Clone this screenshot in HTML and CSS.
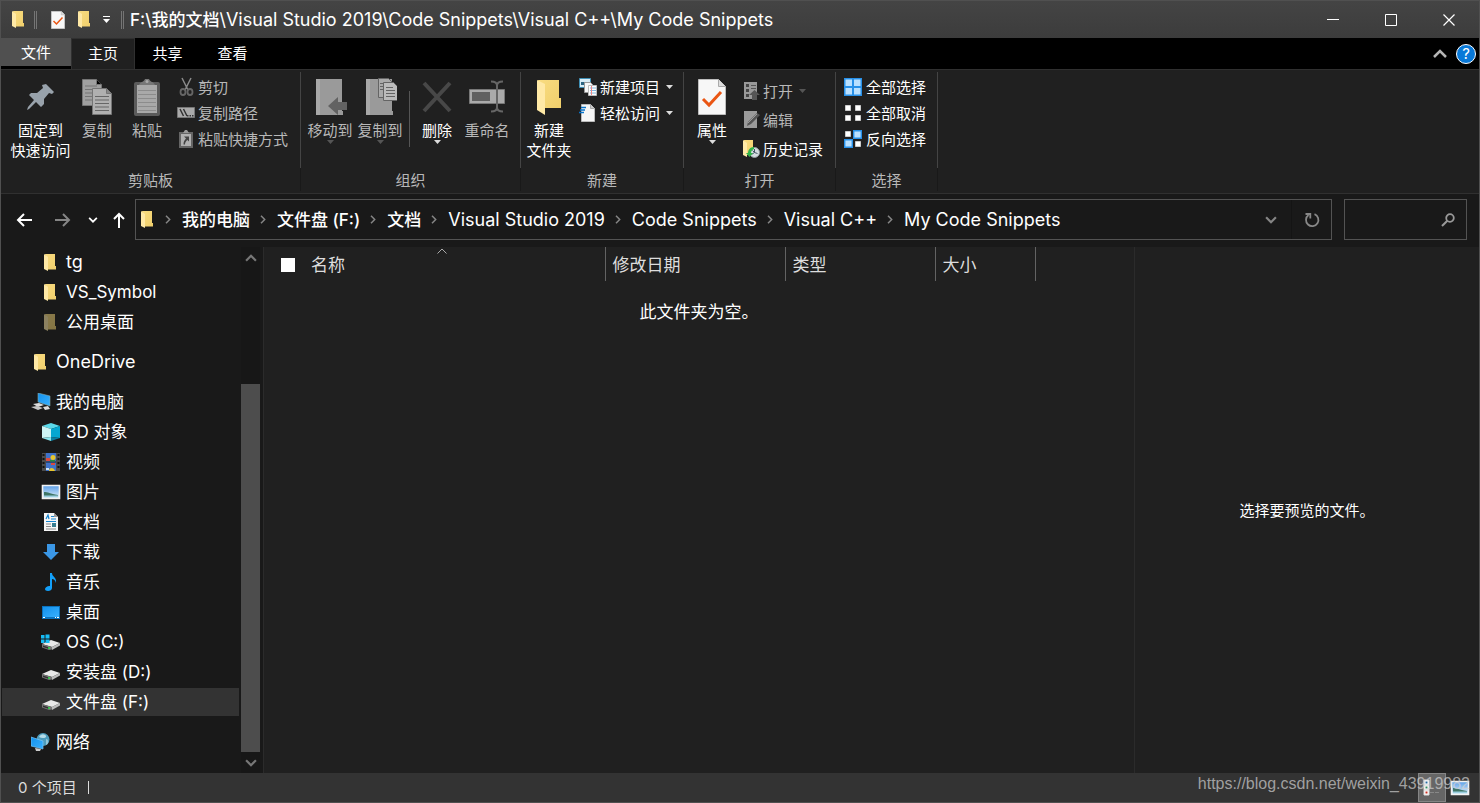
FILE: index.html
```html
<!DOCTYPE html>
<html lang="zh-CN">
<head>
<meta charset="utf-8">
<title>My Code Snippets</title>
<link rel="stylesheet" href="styles.css">
</head>
<body>
<svg class="defs" aria-hidden="true">
  <defs>
    <linearGradient id="gold" x1="0" x2="1" y1="0" y2="1"><stop offset="0" stop-color="#f9dc80"/><stop offset="1" stop-color="#f0cf6c"/></linearGradient>
    <linearGradient id="blue" x1="0" x2="1" y1="0" y2="1"><stop offset="0" stop-color="#1491ec"/><stop offset="1" stop-color="#38b0ff"/></linearGradient>
    <linearGradient id="sky" x1="0" x2="0" y1="0" y2="1"><stop offset="0" stop-color="#5b9ee8"/><stop offset="1" stop-color="#e4f2fb"/></linearGradient>
    <symbol id="folder" viewBox="0 0 12 17">
      <path d="M1 0h10v12h1v3.500H4z" fill="url(#gold)"/>
      <path d="M0 0 4 3v14L0 15z" fill="#ffe9a6"/>
    </symbol>
    <symbol id="page-check" viewBox="0 0 28 36">
      <path d="M.5.5h20l7 7v28H.5z" fill="#f7f7f7" stroke="#bdbdbd"/>
      <path d="M20.500.5v7h7" fill="#ddd" stroke="#aaa"/>
      <path d="m5 20 6 6 12-13" fill="none" stroke="#ea5614" stroke-width="3"/>
    </symbol>
    <symbol id="drop" viewBox="0 0 7 4"><path d="M0 0h7L3.500 4z" fill="currentColor"/></symbol>
    <symbol id="chev" viewBox="0 0 6 9"><path d="m1 .8 3.700 3.700L1 8.200" fill="none" stroke="currentColor" stroke-width="1.500"/></symbol>
    <symbol id="down" viewBox="0 0 11 7"><path d="m1 1 4.500 4.500L10 1" fill="none" stroke="currentColor" stroke-width="2"/></symbol>
    <symbol id="up" viewBox="0 0 11 7"><path d="m1 6 4.500-4.500L10 6" fill="none" stroke="currentColor" stroke-width="2"/></symbol>
    <symbol id="drive" viewBox="0 0 20 18">
      <path d="m1 11 9-4 9 3-8 4z" fill="#e8e8e8"/>
      <path d="m1 11 10 3v2.500L8 17l-7-2.500z" fill="#777"/>
      <path d="m11 14 8-4v2.500L11 17z" fill="#bcbcbc"/>
      <path d="m2 12.500 6 2v1.500l-6-2z" fill="#303030"/><circle cx="8" cy="15" r="1" fill="#2fe04c"/>
    </symbol>
    <symbol id="picture" viewBox="0 0 20 18">
      <path d="M1.500 2.500h17v13h-17z" fill="url(#sky)" stroke="#f2f2f2" stroke-width="1.600"/>
      <path d="M3 9c4 0 6 1.500 14 3v2H3z" fill="#3f7667"/><path d="M3 12.500h14v1.700H3z" fill="#9ccfe0"/>
    </symbol>
  </defs>
</svg>

<div class="window">
  <header class="titlebar">
    <svg class="folder-icon"><use href="#folder"/></svg>
    <span class="divider"></span>
    <button class="quick quick-check" aria-label="属性"><svg class="check-icon"><use href="#page-check"/></svg></button>
    <button class="quick" aria-label="新建文件夹"><svg class="folder-icon"><use href="#folder"/></svg></button>
    <button class="quick quick-more" aria-label="自定义"><svg width="9" height="8" viewBox="0 0 9 8"><path d="M1 0h7v1H1zM1 3h7L4.500 7z" fill="#fff"/></svg></button>
    <span class="divider"></span>
    <h1 class="title">F:\我的文档<span class="latin">\Visual Studio 2019\Code Snippets\Visual C++\My Code Snippets</span></h1>
    <div class="window-buttons">
      <button aria-label="最小化"><svg width="12" height="12"><path d="M0 5.500h12" stroke="#fff"/></svg></button>
      <button aria-label="最大化"><svg width="12" height="12"><path d="M.5.5h11v11H.5z" fill="none" stroke="#fff"/></svg></button>
      <button aria-label="关闭"><svg width="12" height="12"><path d="m.5.5 11 11m0-11-11 11" stroke="#fff" stroke-width="1.200"/></svg></button>
    </div>
  </header>

  <nav class="tabs">
    <button class="tab tab-file">文件</button>
    <button class="tab tab-active">主页</button>
    <button class="tab">共享</button>
    <button class="tab">查看</button>
    <button class="collapse" aria-label="最小化功能区"><svg width="14" height="9" viewBox="0 0 14 9"><path d="m1 8 6-6 6 6" fill="none" stroke="#b5b5b5" stroke-width="2.500"/></svg></button>
    <button class="help" aria-label="帮助">?</button>
  </nav>

  <section class="ribbon">
    <div class="group group-clip">
      <div class="tools">
        <button class="big big-wide"><svg width="28" height="40" viewBox="0 0 28 40"><path d="m19 6 8 8-2 2-3-1-5 6v5l-3 3-5-5-7 7-2 1 1-3 6-7-5-5 2-2 6 0 6-5-1-3z" fill="#98a2ab"/></svg><span>固定到<br>快速访问</span></button>
        <button class="big dim"><svg width="32" height="40" viewBox="0 0 32 40"><g stroke="#757575"><path d="M1.500 1.500h14l5 5v21h-19z" fill="#a0a0a0"/><path d="M4 8h12M4 11.500h14M4 15h8M4 18.500h8M4 22h8M15.500 1.500v5h5"/><path d="M11.500 10.500h14l5 5v21h-19z" fill="#b0b0b0"/><path d="M25.500 10.500v5h5" fill="#888"/><path d="M14 18.500h14M14 22h14M14 25.500h14M14 29h14M14 32.500h14" stroke="#666"/></g></svg><span>复制</span></button>
        <button class="big dim"><svg width="28" height="40" viewBox="0 0 28 40"><rect x="1" y="4" width="26" height="34" rx="2" fill="#5b5b5b"/><path d="M4 7h20v28H4z" fill="#a9a9a9"/><path d="M5 12.500h18M5 16.500h18M5 20.500h18M5 24.500h18M5 28.500h18M5 32.500h18" stroke="#8c8c8c"/><path d="M6 7c1-3 5-3 6-6h4c1 3 5 3 6 6z" fill="#777"/><circle cx="14" cy="3.500" r="1.500" fill="#aaa"/></svg><span>粘贴</span></button>
        <div class="small-list">
          <button class="small dim"><svg width="18" height="20" viewBox="0 0 18 20"><path d="m5 1 6 12M14 1 8 13" stroke="#8a8a8a" stroke-width="1.500"/><g fill="none" stroke="#666" stroke-width="1.800"><ellipse cx="6" cy="15" rx="2.500" ry="3"/><ellipse cx="13" cy="15" rx="2.500" ry="3"/></g></svg>剪切</button>
          <button class="small dim"><svg width="18" height="18" viewBox="0 0 18 18"><path d="M.5 3.500h17v10H.5z" fill="#aaa" stroke="#777"/><path d="m3 5 3.500 7M6.500 5l3.500 7" stroke="#333" stroke-width="1.500"/><path d="M10 11h1.500v1.500H10zM12.500 11H14v1.500h-1.500zM15 11h1.500v1.500H15z" fill="#333"/></svg>复制路径</button>
          <button class="small dim"><svg width="18" height="18" viewBox="0 0 18 18"><path d="M2 2h14v16H2z" fill="#656565"/><path d="M4 4h10v12H4z" fill="#b0b0b0"/><path d="M6 3 8 0h2l2 3z" fill="#999"/><path d="M7 6.500h5v5l-1.500-1.500C9 11 8 12.500 8 14.500H6.500c0-3 1-4.500 2.500-6z" fill="#444"/></svg>粘贴快捷方式</button>
        </div>
      </div>
      <div class="group-name">剪贴板</div>
    </div>

    <div class="group group-organize">
      <div class="tools">
        <button class="big dim"><svg width="34" height="40" viewBox="0 0 34 40"><path d="M3 1h26v32h1v4H3z" fill="#9a9a9a"/><path d="M3 1h4v36H3z" fill="#a8a8a8"/><path d="m15 28 10-9v5h10v8H25v5z" fill="#626262"/></svg><span>移动到</span><svg class="drop faded"><use href="#drop"/></svg></button>
        <button class="big dim"><svg width="34" height="40" viewBox="0 0 34 40"><path d="M3 1h26v32h1v4H3z" fill="#9a9a9a"/><path d="M3 1h4v36H3z" fill="#a8a8a8"/><g stroke="#646464"><path d="M15.500.5h10l4 4v15h-14z" fill="#aaa"/><path d="M17 5.500h9M17 8.500h9M17 11.500h9"/><path d="M20.500 4.500h10l4 4v14h-14z" fill="#bbb"/><path d="M23 9.500h7M23 12.500h9M23 15.500h9M23 18.500h9"/></g></svg><span>复制到</span><svg class="drop faded"><use href="#drop"/></svg></button>
        <span class="tool-divider"></span>
        <button class="big"><svg width="30" height="40" viewBox="0 0 30 40"><path d="m2 5 26 28M28 5 2 33" stroke="#484848" stroke-width="4"/></svg><span>删除</span><svg class="drop"><use href="#drop"/></svg></button>
        <button class="big dim"><svg width="36" height="40" viewBox="0 0 36 40"><path d="M.5 11.500h35v14H.5z" fill="#aaa" stroke="#777"/><path d="M3 14h18v9H3z" fill="#606060"/><path d="M22 3.500c4 0 6 1 6 4v22c0 3-2 4-6 4m12-30c-4 0-6 1-6 4m0 22c0 3 2 4 6 4" fill="none" stroke="#666" stroke-width="2"/></svg><span>重命名</span></button>
      </div>
      <div class="group-name">组织</div>
    </div>

    <div class="group group-new">
      <div class="tools">
        <button class="big"><svg width="26" height="40" viewBox="0 0 26 40"><path d="M2 2h21v18h2v10H8z" fill="url(#gold)"/><path d="m1 2 8 4v31l-8-5z" fill="#ffe9a6"/></svg><span>新建<br>文件夹</span></button>
        <div class="small-list">
          <button class="small"><svg width="18" height="18" viewBox="0 0 18 18"><path d="M.5.500h11v9H.5z" fill="#d8ecf6" stroke="#3f8fb5"/><path d="M2 4h5v3H2z" fill="#2b6380"/><path d="M5.500 4.500h6l2 2v8h-8z" fill="#f7f7f7" stroke="#999"/><path d="M9.500 7.500h8v10h-8z" fill="#fff" stroke="#bbb"/><path d="M11 10h6M11 12.500h6M11 15h6" stroke="#83b6de"/><path d="M12.500 8v9" stroke="#e88"/></svg>新建项目<svg class="drop"><use href="#drop"/></svg></button>
          <button class="small"><svg width="18" height="18" viewBox="0 0 18 18"><path d="M2.500.5h9l4 4v13h-13z" fill="#f6f6f6" stroke="#bbb"/><path d="M11.500.5v4h4" fill="#ccc" stroke="#aaa"/><path d="M2 3.500h5M1 6h5M0 8.500h5" stroke="#0873c9" stroke-width="1.500"/></svg>轻松访问<svg class="drop"><use href="#drop"/></svg></button>
        </div>
      </div>
      <div class="group-name">新建</div>
    </div>

    <div class="group group-open">
      <div class="tools">
        <button class="big"><svg width="28" height="40" viewBox="0 -1 28 40"><use href="#page-check" width="28" height="36"/></svg><span>属性</span><svg class="drop"><use href="#drop"/></svg></button>
        <div class="small-list small-list-open">
          <button class="small dim"><svg width="18" height="18" viewBox="0 0 18 18"><path d="M2 0h13v17H2z" fill="#999"/><path d="M4 2h3v3H4zM4 7h3v3H4zM4 12h3v3H4z" fill="#444"/><path d="M9 3.500h5M9 6.500h5" stroke="#555"/><path d="m12.500 8 5.500 5h-3v5h-5v-5H7z" fill="#555"/></svg>打开<svg class="drop faded"><use href="#drop"/></svg></button>
          <button class="small dim"><svg width="18" height="18" viewBox="0 0 18 18"><path d="M2 0h13v17H2z" fill="#9b9b9b"/><path d="m5 15 1-4L15 2l3 2-9 9z" fill="#555"/><path d="m6 12 9-9" stroke="#999"/></svg>编辑</button>
          <button class="small"><svg width="18" height="18" viewBox="0 0 18 18"><path d="M2 0h9v15H3z" fill="url(#gold)"/><path d="m1 0 4 3v14l-4-2z" fill="#ffe9a6"/><circle cx="12.500" cy="12.500" r="5" fill="#d5dce0" stroke="#929ba0"/><path d="m12.500 9v3.500l3 1m-5-3 2 2-3 2" fill="none" stroke="#456"/><path d="M12 7c-4 0-6 3-6 6H4l3.500 4 3.500-4H9c0-2 1-3 3-4z" fill="#31b449"/></svg>历史记录</button>
        </div>
      </div>
      <div class="group-name">打开</div>
    </div>

    <div class="group group-select">
      <div class="tools">
        <div class="small-list">
          <button class="small"><svg width="18" height="18" viewBox="0 0 18 18"><path d="M0 0h18v18H0z" fill="#2790e8"/><path d="M1.500 1.500H8V8H1.500zM10 1.500h6.500V8H10zM1.500 10H8v6.500H1.500zM10 10h6.500v6.500H10z" fill="#b9e0ff"/></svg>全部选择</button>
          <button class="small"><svg width="18" height="18" viewBox="0 0 18 18"><path d="M1.500 1.500h5v5h-5zM11.500 1.500h5v5h-5zM1.500 11.500h5v5h-5zM11.500 11.500h5v5h-5z" fill="#fff" stroke="#ccc"/></svg>全部取消</button>
          <button class="small"><svg width="18" height="18" viewBox="0 0 18 18"><path d="M1.500 1.500h5v5h-5zM11.500 11.500h5v5h-5z" fill="#fff" stroke="#ccc"/><path d="M9.700.7h7.600v7.600H9.700zM.7 9.700h7.600v7.600H.7z" fill="#b9e0ff" stroke="#2790e8" stroke-width="1.400"/></svg>反向选择</button>
        </div>
      </div>
      <div class="group-name">选择</div>
    </div>
  </section>

  <section class="address-row">
    <div class="history">
      <button aria-label="后退"><svg width="16" height="14" viewBox="0 0 16 14"><path d="M16 7H2m6-6L2 7l6 6" fill="none" stroke="#fff" stroke-width="2"/></svg></button>
      <button aria-label="前进"><svg width="16" height="14" viewBox="0 0 16 14"><path d="M0 7h14M8 1l6 6-6 6" fill="none" stroke="#858585" stroke-width="2"/></svg></button>
      <button class="recent" aria-label="最近"><svg width="10" height="6"><use href="#down"/></svg></button>
      <button class="parent" aria-label="上移"><svg width="12" height="16" viewBox="0 0 12 16"><path d="M6 16V2M1 7l5-5 5 5" fill="none" stroke="#fff" stroke-width="2"/></svg></button>
    </div>
    <div class="address">
      <svg class="folder-icon"><use href="#folder"/></svg>
      <ol class="crumbs">
        <li><svg class="chev"><use href="#chev"/></svg><a href="#">我的电脑</a></li>
        <li><svg class="chev"><use href="#chev"/></svg><a href="#">文件盘 (F:)</a></li>
        <li><svg class="chev"><use href="#chev"/></svg><a href="#">文档</a></li>
        <li><svg class="chev"><use href="#chev"/></svg><a class="latin" href="#">Visual Studio 2019</a></li>
        <li><svg class="chev"><use href="#chev"/></svg><a class="latin" href="#">Code Snippets</a></li>
        <li><svg class="chev"><use href="#chev"/></svg><a class="latin" href="#">Visual C++</a></li>
        <li><svg class="chev"><use href="#chev"/></svg><a class="latin" href="#">My Code Snippets</a></li>
      </ol>
      <button class="address-drop" aria-label="以前的位置"><svg width="12" height="8"><use href="#down"/></svg></button>
      <button class="refresh" aria-label="刷新"><svg width="16" height="16" viewBox="0 0 16 16"><path d="M10.500 2.200a6.200 6.200 0 1 1-6 .8M1.500 2h4.800v4.500" fill="none" stroke="#888" stroke-width="1.800"/></svg></button>
    </div>
    <label class="search">
      <input type="search" aria-label="搜索">
      <svg width="14" height="14" viewBox="0 0 14 14"><circle cx="9" cy="5" r="3.800" fill="none" stroke="#999" stroke-width="1.800"/><path d="M6.300 7.700 1 13" stroke="#999" stroke-width="2"/></svg>
    </label>
  </section>

  <main class="body">
    <aside class="sidebar">
      <nav class="tree">
        <ul class="branch">
          <li><a class="node" href="#"><svg class="folder-icon"><use href="#folder"/></svg><span class="latin">tg</span></a></li>
          <li><a class="node" href="#"><svg class="folder-icon"><use href="#folder"/></svg>VS_Symbol</a></li>
          <li><a class="node" href="#"><svg class="folder-icon hidden-folder"><use href="#folder"/></svg>公用桌面</a></li>
        </ul>
        <a class="node root" href="#"><svg class="folder-icon"><use href="#folder"/></svg><span class="latin">OneDrive</span></a>
        <a class="node root" href="#"><svg viewBox="0 0 20 18"><path d="m7 0 12 3v10L7 9z" fill="url(#blue)" stroke="#8aa" stroke-width=".6"/><path d="m2 11 6-1 5 2-6 2z" fill="#ddd"/><path d="m0 14 6-1 6 2-5 2z" fill="#c8c8c8"/><path d="m12 14 5-1 2 3-5 1z" fill="#ddd"/></svg>我的电脑</a>
        <ul class="branch">
          <li><a class="node" href="#"><svg viewBox="0 0 20 18"><path d="m10 0 9 3-9 3-9-3z" fill="#5bd9ea"/><path d="m1 3 9 3v8l-9 1z" fill="#cdf4f5"/><path d="M19 3 10 6v8l9 1z" fill="#05a7d1"/><path d="m1 15 9-1v4z" fill="#8be6ee"/><path d="m19 15-9-1v4z" fill="#0a7fa2"/></svg>3D 对象</a></li>
          <li><a class="node" href="#"><svg viewBox="0 0 20 18"><path d="M1 0h18v18H1z" fill="#4a4a4a"/><path d="M5 0h10v18H5z" fill="#3f72c9"/><path d="M5 8.500h10v1H5z" fill="#222"/><path d="M2.500 1v16M17.500 1v16" stroke="#111" stroke-width="2" stroke-dasharray="2 2"/><circle cx="12" cy="4.500" r="2.500" fill="#e7c52f"/><path d="M5 5h4v3H5zM10 10h4v2h-4z" fill="#dc4a3e"/><path d="M9 7h5v1.500H9z" fill="#2d8c3c"/><path d="M8 18c0-4 5-4 6 0z" fill="#e7c52f"/><path d="M5 15h3v2H5z" fill="#cfe2f8"/></svg>视频</a></li>
          <li><a class="node" href="#"><svg><use href="#picture"/></svg>图片</a></li>
          <li><a class="node" href="#"><svg viewBox="0 0 20 18"><path d="M3 0h10l4 4v14H3z" fill="#f6f6f6"/><path d="M13 0v4h4z" fill="#999"/><path d="m5 6 2-4 1 4M10 3.500h3M10 6h5M5 8.500h10" fill="none" stroke="#1685cf" stroke-width="1.200"/><path d="M5 11h5M5 13.500h5M5 16h10" stroke="#888"/><path d="M11 10h4v4h-4z" fill="#377c8f"/></svg>文档</a></li>
          <li><a class="node" href="#"><svg viewBox="0 0 20 18"><path d="M6 1h8v8h4l-8 8-8-8h4z" fill="#3b97e6"/></svg>下载</a></li>
          <li><a class="node" href="#"><svg viewBox="0 0 20 18"><path d="M9 0h2c0 4 5 4 4 10-1-3-2-4-4-4v9c0 2-2 3-4 3s-3-1-3-2c0-2 3-3.500 5-3z" fill="#12a0fa"/></svg>音乐</a></li>
          <li><a class="node" href="#"><svg viewBox="0 0 20 18"><path d="M1 3h18v13H1z" fill="#0b72bd"/><path d="M2 4h16v10H2z" fill="url(#blue)"/><path d="M2 14.500h2M14 14.500h1M16 14.500h2" stroke="#fff"/></svg>桌面</a></li>
          <li><a class="node" href="#"><svg viewBox="0 0 20 18"><use href="#drive" width="20" height="18"/><path d="M0 2h3.500v3.500H0zM4.500 1.500h4v4h-4zM0 6.500h3.500V10H0zM4.500 6.500h4V10h-4z" fill="#16bcf5"/></svg>OS (C:)</a></li>
          <li><a class="node" href="#"><svg><use href="#drive"/></svg>安装盘 (D:)</a></li>
          <li><a class="node selected" href="#"><svg><use href="#drive"/></svg>文件盘 (F:)</a></li>
        </ul>
        <a class="node root" href="#"><svg viewBox="0 0 20 18"><circle cx="12" cy="6.500" r="6.500" fill="#4d9cbc"/><path d="M8 4c2-4 6-3 7-1s-4 3-7 1z" fill="#b6dce8"/><path d="M15 6c3 0 3 5 0 6z" fill="#92c6d8"/><path d="m0 4 12 4v8L0 13z" fill="url(#blue)" stroke="#78c4f4" stroke-width=".7"/><path d="m4 15 6 1-1 2H5z" fill="#ccc"/></svg>网络</a>
      </nav>
      <div class="scrollbar">
        <button aria-label="向上滚动"><svg width="12" height="8"><use href="#up"/></svg></button>
        <div class="track"><div class="thumb"></div></div>
        <button aria-label="向下滚动"><svg width="12" height="8"><use href="#down"/></svg></button>
      </div>
    </aside>

    <section class="files">
      <svg class="sort" viewBox="0 0 10 6"><path d="m.5 5.500 4.500-4.500 4.500 4.500" fill="none" stroke="#aaa"/></svg>
      <table class="columns">
        <thead>
          <tr>
            <th class="col-name" scope="col"><input type="checkbox" aria-label="全选">名称</th>
            <th class="col-date" scope="col">修改日期</th>
            <th class="col-type" scope="col">类型</th>
            <th class="col-size" scope="col">大小</th>
          </tr>
        </thead>
      </table>
      <p class="empty">此文件夹为空。</p>
    </section>

    <aside class="preview">选择要预览的文件。</aside>
  </main>

  <footer class="status">
    <span>0 个项目</span><span class="status-divider"></span>
    <div class="views">
      <button class="view view-on" aria-label="详细信息"><svg width="20" height="20" viewBox="0 0 20 20"><path d="M2 2h5v5H2zM2 7h5v5H2zM2 12h5v5H2z" fill="#fff" stroke="#ddd"/><path d="M3.500 3.500h2v2h-2z" fill="#246b9e"/><path d="M3.500 8.500h2v2h-2z" fill="#298653"/><path d="M3.500 13.500h2v2h-2z" fill="#c92f20"/><path d="M8 14.500h4m1 0h4" stroke="#888"/></svg></button>
      <button class="view" aria-label="大缩略图"><svg width="20" height="18"><use href="#picture"/></svg></button>
    </div>
    <span class="watermark">https://blog.csdn.net/weixin_43919982</span>
  </footer>
</div>
</body>
</html>
```
FILE: styles.css
```css
* { box-sizing: border-box; }

body {
  margin: 0;
  background: #191919;
  color: #fff;
  font: 15px/20px Inter, "Noto Sans CJK SC", sans-serif;
}

h1, p, ul, ol { margin: 0; padding: 0; }
ul, ol { list-style: none; }
a { color: inherit; text-decoration: none; }
svg { display: block; flex: none; }

button {
  display: flex;
  align-items: center;
  justify-content: center;
  padding: 0;
  border: 0;
  background: none;
  color: inherit;
  font: inherit;
}

.defs { position: absolute; width: 0; height: 0; }

.window {
  display: flex;
  flex-direction: column;
  height: 100vh;
  border: 1px solid #505050;
}

.folder-icon { width: 12px; height: 17px; }
.latin { font-size: 18px; font-weight: 400; }

/* Title bar */
.titlebar {
  display: flex;
  align-items: center;
  height: 37px;
  padding: 0 1px 0 11px;
  background: linear-gradient(#444, #3c3c3c);
}
.divider {
  width: 3px;
  height: 18px;
  margin: 0 6px 0 10px;
  border: 1px solid #757575;
  border-width: 0 1px;
}
.quick { width: 26px; }
.quick-check { margin-left: 2px; }
.quick-more { width: 18px; }
.quick-more + .divider { margin-left: 6px; }
.check-icon { width: 14px; height: 18px; }
.title {
  flex: 1;
  overflow: hidden;
  white-space: nowrap;
  font-size: 17px;
  line-height: 24px;
  font-weight: 500;
}
.window-buttons { display: flex; }
.window-buttons button { width: 58px; height: 36px; }

/* Tabs */
.tabs {
  display: flex;
  height: 31px;
  background: #000;
}
.tab { width: 65px; }
.tab-file {
  width: 70px;
  height: 28px;
  padding-top: 2px;
  background: #505050;
}
.tab-active {
  width: 64px;
  border: 1px solid #303030;
  border-bottom: 0;
  background: #202020;
}
.collapse { width: 28px; margin-left: auto; }
.help {
  align-self: center;
  width: 20px;
  height: 20px;
  margin: 0 3px 0 2px;
  border: 1px solid #fff;
  border-radius: 50%;
  background: #0878d8;
}

/* Ribbon */
.ribbon {
  display: flex;
  height: 125px;
  padding: 2px 0;
  border: 1px solid #303030;
  border-width: 1px 0;
  background: #202020;
}
.group {
  display: flex;
  flex-direction: column;
  border-right: 1px solid;
  border-image: linear-gradient(#444 80%, #191919 80%) 1;
}
.tools { display: flex; flex: 1; }
.group-clip .tools { padding: 0 12px 0 8px; }
.group-organize .tools { padding: 0 8px 0 4px; }
.group-new .tools { padding: 0 10px 0 3px; }
.group-open .tools { padding: 0 12px 0 3px; }
.group-select .tools { padding: 0 11px 0 8px; }
.group-name { color: #b8b8b8; text-align: center; }

.big {
  flex-direction: column;
  justify-content: flex-start;
  width: 50px;
  padding-top: 6px;
  line-height: 20px;
  white-space: nowrap;
}
.big span { margin-top: 3px; }
.big-wide { width: 63px; }
.dim { color: #b8b8b8; }
.drop { width: 7px; height: 4px; color: #ddd; }
.big .drop { margin-top: -1px; }
.faded { color: #555; }

.small-list { margin: 2px 0 0 5px; }
.small-list-open { margin-top: 4px; }
.group-select .small-list { margin-left: 0; }
.small {
  justify-content: flex-start;
  gap: 3px;
  height: 26px;
  padding-top: 2px;
  white-space: nowrap;
}
.small svg { margin-bottom: 2px; }
.small .drop { margin-left: 3px; }
.small-list-open .small { height: 29px; }
.group-select .small { gap: 4px; }
.tool-divider { width: 1px; height: 56px; margin: 19px 2px 0 4px; background: #555; }

/* Address row */
.address-row {
  display: flex;
  align-items: center;
  height: 53px;
  padding: 0 12px 2px 3px;
}
.history { display: flex; width: 131px; }
.history button { width: 39px; height: 40px; }
.history .recent { width: 21px; }
.history .parent { width: 31px; }
.address {
  display: flex;
  flex: 1;
  align-items: center;
  height: 41px;
  padding-left: 5px;
  border: 1px solid #535353;
}
.crumbs {
  display: flex;
  flex: 1;
  overflow: hidden;
  margin-left: 2px;
  font-size: 17px;
  line-height: 24px;
  font-weight: 500;
  white-space: nowrap;
}
.crumbs li { display: flex; align-items: center; }
.chev { width: 6px; height: 9px; margin: 0 11px 0 10px; color: #858585; }
.address-drop { width: 40px; height: 39px; color: #858585; }
.refresh { width: 40px; height: 39px; border-left: 1px solid #141414; }
.search {
  display: flex;
  align-items: center;
  width: 123px;
  height: 41px;
  margin-left: 12px;
  padding-right: 11px;
  border: 1px solid #535353;
}
.search input {
  flex: 1;
  min-width: 0;
  border: 0;
  outline: 0;
  background: none;
  color: #fff;
  font: inherit;
}

/* Panes */
.body { display: flex; flex: 1; min-height: 0; }

.sidebar { display: flex; width: 262px; font-size: 17px; }
.tree { flex: 1; overflow: hidden; padding: 0 2px 0 1px; }
.node {
  display: flex;
  align-items: center;
  gap: 5px;
  height: 30px;
  padding-left: 39px;
  border: 1px solid #191919;
  border-width: 1px 0;
  white-space: nowrap;
}
.node svg { width: 20px; height: 18px; }
.node .folder-icon { width: 12px; height: 17px; margin: 0 5px 0 3px; }
.node .hidden-folder { opacity: .5; }
.root { padding-left: 29px; }
.branch + .root, .root + .root { margin-top: 10px; }
.selected { background: #333; }
.scrollbar {
  display: flex;
  flex-direction: column;
  width: 19px;
  margin-right: 3px;
  background: #171717;
}
.scrollbar button { height: 21px; color: #777; }
.track { display: flex; flex: 1; align-items: flex-end; }
.thumb { width: 100%; height: 76%; background: #4d4d4d; }

.files {
  position: relative;
  flex: 1;
  border-left: 1px solid #2b2b2b;
  background: #202020;
}
.sort { position: absolute; top: 1px; left: 173px; width: 10px; height: 6px; }
.columns {
  table-layout: fixed;
  width: 772px;
  border-collapse: collapse;
  color: #ddd;
  font-size: 17px;
}
.columns th {
  height: 34px;
  padding: 1px 7px 0;
  border-right: 1px solid #636363;
  text-align: left;
  font-weight: 400;
}
.columns .col-name { width: 341px; padding-left: 17px; }
.col-date { width: 180px; }
.col-type { width: 150px; }
.columns input {
  appearance: none;
  width: 14px;
  height: 14px;
  margin: 0 16px 0 0;
  background: #fff;
  vertical-align: -1px;
}
.empty { margin-top: 21px; font-size: 17px; text-align: center; }

.preview {
  display: flex;
  align-items: center;
  justify-content: center;
  width: 345px;
  padding-top: 2px;
  border-left: 1px solid #2b2b2b;
  background: #202020;
}

/* Status bar */
.status {
  position: relative;
  display: flex;
  align-items: center;
  height: 29px;
  padding: 0 5px 0 17px;
  background: #333;
  color: #ddd;
}
.status-divider { width: 1px; height: 13px; margin-left: 11px; background: #ddd; }
.views { display: flex; margin-left: auto; }
.view { width: 28px; height: 29px; }
.view-on { border: 1px solid #858585; background: #666; }
.watermark {
  position: absolute;
  top: 1px;
  right: 9px;
  color: rgba(210, 210, 210, .7);
  font: 16px/20px "Liberation Sans", sans-serif;
}
```
